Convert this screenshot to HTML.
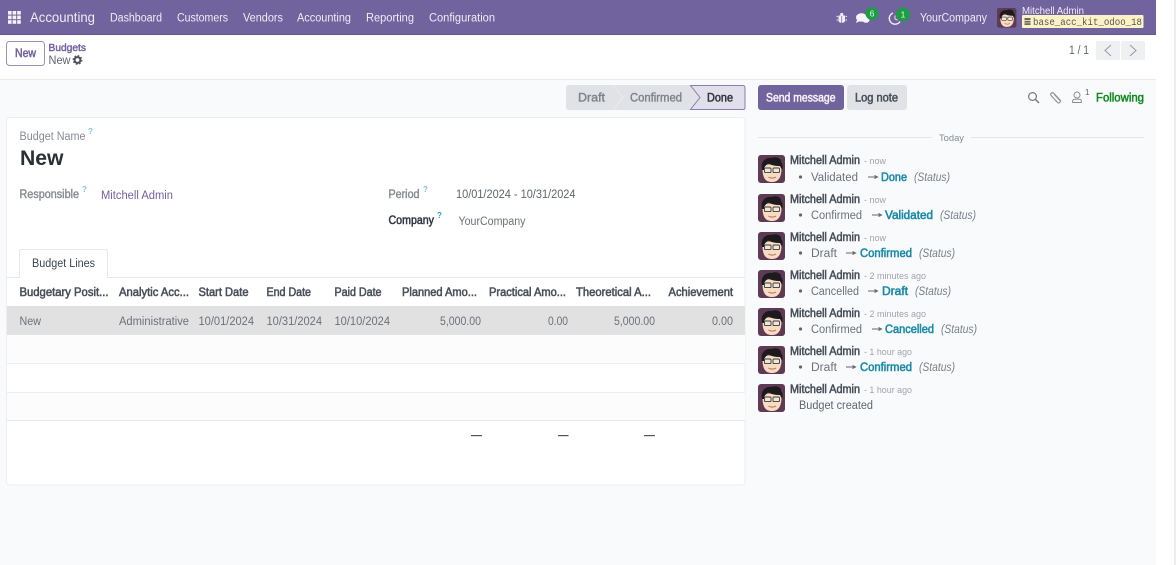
<!DOCTYPE html>
<html><head><meta charset="utf-8"><title>Budgets</title>
<style>
html,body{margin:0;padding:0;background:#fff;width:1176px;height:565px;overflow:hidden}
svg{display:block;position:absolute;left:0;top:0;filter:blur(.3px)}
text{font-family:"Liberation Sans",sans-serif;font-size:11.5px;fill:#6c7178}
.n{fill:#efecf5;font-size:11.5px}
.p{fill:#71639e}
.l{fill:#1a8aa8;stroke:#1a8aa8;stroke-width:.55px}
.s{font-style:italic;fill:#7a7f87}
.t{font-size:9.5px;fill:#a0a4aa}
.q{font-size:8px;fill:#7cc3da;font-weight:700}
.h{fill:#4a505b;stroke:#4a505b;stroke-width:.55px}
</style></head><body>
<svg width="1176" height="565" viewBox="0 0 1176 565" xmlns="http://www.w3.org/2000/svg">
<defs>
<g id="av">
<rect x="0" y="0" width="27" height="28" rx="3" fill="#5f3a54"/>
<path d="M4.500 13C4.500 24 8 27 14 27C20 27 23.500 23 23.500 13C23.500 8 4.500 8 4.500 13Z" fill="#f8dcc2"/>
<path d="M4 15C2 6 8 2 14 3C17 1 24 3 23 7C25 9 25 12 24 15L22 11C17 11 12 10 10 8C9 10 6 11 6 15Z" fill="#1d1a1e"/>
<rect x="6.500" y="13" width="6.500" height="4.600" rx="1" fill="#efe6da" stroke="#3a3a3a" stroke-width=".9"/>
<rect x="15" y="13" width="6.500" height="4.600" rx="1" fill="#efe6da" stroke="#3a3a3a" stroke-width=".9"/>
<path d="M10.500 22C12.500 23.500 16 23.500 18 22" stroke="#b06a52" stroke-width="1" fill="none"/>
</g>
<path id="arw" d="M0 3.500H8M6.500 2L9.500 3.500L6.500 5" stroke="#666" stroke-width="1" fill="none"/>
</defs>

<!-- backgrounds -->
<rect x="1174" y="0" width="2" height="565" fill="#eeeeee"/>
<rect x="0" y="79" width="1156" height="486" fill="#f9fafb"/>
<rect x="0" y="35" width="1156" height="44" fill="#fff"/>
<rect x="0" y="79" width="1156" height="1" fill="#e9ecef"/>
<rect x="0" y="0" width="1156" height="35" fill="#71639e"/>
<rect x="0" y="34" width="1156" height="1" fill="#65588f"/>

<!-- navbar -->
<g fill="#f4f2f8">
<rect x="8" y="11" width="3.600" height="3.600"/><rect x="12.600" y="11" width="3.600" height="3.600"/><rect x="17.200" y="11" width="3.600" height="3.600"/>
<rect x="8" y="15.600" width="3.600" height="3.600"/><rect x="12.600" y="15.600" width="3.600" height="3.600"/><rect x="17.200" y="15.600" width="3.600" height="3.600"/>
<rect x="8" y="20.200" width="3.600" height="3.600"/><rect x="12.600" y="20.200" width="3.600" height="3.600"/><rect x="17.200" y="20.200" width="3.600" height="3.600"/>
</g>
<text class="n" x="30" y="22" style="font-size:14px" textLength="65" lengthAdjust="spacingAndGlyphs">Accounting</text>
<text class="n" x="110" y="21.500" textLength="52" lengthAdjust="spacingAndGlyphs">Dashboard</text>
<text class="n" x="177" y="21.500" textLength="51" lengthAdjust="spacingAndGlyphs">Customers</text>
<text class="n" x="243" y="21.500" textLength="40" lengthAdjust="spacingAndGlyphs">Vendors</text>
<text class="n" x="297" y="21.500" textLength="54" lengthAdjust="spacingAndGlyphs">Accounting</text>
<text class="n" x="366" y="21.500" textLength="48" lengthAdjust="spacingAndGlyphs">Reporting</text>
<text class="n" x="429" y="21.500" textLength="66" lengthAdjust="spacingAndGlyphs">Configuration</text>

<!-- systray -->
<path d="M838.500 15.500H845V21.500Q843.500 23 841.750 23Q840 23 838.500 21.500Z" fill="#f1eef6"/>
<circle cx="841.750" cy="14.500" r="1.600" fill="#f1eef6"/>
<path d="M838 17L836.500 16M845.500 17L847 16M838 20H836.500M845.500 20H847" stroke="#f1eef6" stroke-width=".9"/>
<rect x="841.400" y="16" width=".7" height="7" fill="#71639e"/>
<ellipse cx="861.500" cy="17.500" rx="5.500" ry="4.200" fill="#f6f4f9"/>
<path d="M857 20L856 23L860 21Z" fill="#f6f4f9"/>
<ellipse cx="866" cy="20" rx="3.500" ry="2.800" fill="#f6f4f9"/>
<circle cx="872" cy="13.500" r="6.500" fill="#1f9d45"/>
<text x="872" y="16.500" text-anchor="middle" style="font-size:8.500px;fill:#eaf7ee">6</text>
<path d="M900 21.500A5.800 5.800 0 1 1 893 13" stroke="#f1eef6" stroke-width="1.400" fill="none"/>
<path d="M895 15.500V19L897.500 20.200" stroke="#f1eef6" stroke-width=".9" fill="none"/>
<circle cx="903" cy="14.500" r="7" fill="#1f9d45"/>
<text x="903" y="17.500" text-anchor="middle" style="font-size:8.500px;fill:#eaf7ee">1</text>
<text class="n" x="920" y="21.500" textLength="67" lengthAdjust="spacingAndGlyphs">YourCompany</text>
<use href="#av" transform="translate(997 8) scale(.72 .7)"/>
<text class="n" x="1022" y="14" style="font-size:10px" textLength="62" lengthAdjust="spacingAndGlyphs">Mitchell Admin</text>
<rect x="1022" y="15" width="121.500" height="13" rx="1" fill="#fdf2c6"/>
<rect x="1024.500" y="18" width="6" height="2" fill="#6a6a60"/><rect x="1024.500" y="20.800" width="6" height="1.800" fill="#6a6a60"/><rect x="1024.500" y="23.200" width="6" height="1.800" fill="#6a6a60"/>
<text x="1033" y="25" style="font-family:'Liberation Mono',monospace;font-size:10.500px;fill:#55554f" textLength="109" lengthAdjust="spacingAndGlyphs">base_acc_kit_odoo_18</text>

<!-- control panel -->
<rect x="6.500" y="41.500" width="38" height="24" rx="3" fill="#fff" stroke="#9a90ba"/>
<text class="p" x="15" y="57" textLength="21" lengthAdjust="spacingAndGlyphs" style="stroke:#71639e;stroke-width:.5px">New</text>
<text class="p" x="48.500" y="51" style="font-size:10.500px;stroke:#71639e;stroke-width:.45px" textLength="37.500" lengthAdjust="spacingAndGlyphs">Budgets</text>
<text x="48.500" y="64" textLength="22" lengthAdjust="spacingAndGlyphs" style="fill:#5f656d">New</text>
<circle cx="77.500" cy="60" r="2.900" fill="none" stroke="#4a5058" stroke-width="2"/>
<circle cx="77.500" cy="60" r="4.300" fill="none" stroke="#4a5058" stroke-width="1.200" stroke-dasharray="1.700 1.670"/>
<text x="1069" y="54" textLength="20" lengthAdjust="spacingAndGlyphs" style="fill:#5f656d">1 / 1</text>
<rect x="1096" y="41" width="24" height="19" rx="2" fill="#eff0f2"/>
<rect x="1121" y="41" width="24" height="19" rx="2" fill="#eff0f2"/>
<path d="M1111 45L1105 50.500L1111 56" stroke="#9a9ea5" stroke-width="1.100" fill="none"/>
<path d="M1130 45L1136 50.500L1130 56" stroke="#9a9ea5" stroke-width="1.100" fill="none"/>

<!-- statusbar -->
<path d="M569 85H613L623 97.500L613 110H569Q566 110 566 107V88Q566 85 569 85Z" fill="#e0e2e6"/>
<path d="M613 85H690L700 97.500L690 110H613L623 97.500Z" fill="#e0e2e6"/>
<path d="M613 85L623 97.500L613 110" stroke="#eaecee" stroke-width="1" fill="none"/>
<path d="M690.500 85.500H743Q745 85.500 745 88V107Q745 109.500 743 109.500H690.500L700 97.500Z" fill="#e2dfec" stroke="#8a7eb0"/>
<text x="578" y="101.500" textLength="27" lengthAdjust="spacingAndGlyphs" style="fill:#7e838a;stroke:#7e838a;stroke-width:.4px">Draft</text>
<text x="630" y="101.500" textLength="52" lengthAdjust="spacingAndGlyphs" style="fill:#7e838a;stroke:#7e838a;stroke-width:.4px">Confirmed</text>
<text x="707" y="101.500" textLength="26" lengthAdjust="spacingAndGlyphs" style="fill:#2f3540;stroke:#2f3540;stroke-width:.5px">Done</text>

<!-- chatter buttons -->
<rect x="758" y="85" width="86" height="25" rx="3" fill="#71639e"/>
<text x="766" y="101.500" textLength="69.500" lengthAdjust="spacingAndGlyphs" style="fill:#f6f4fa;stroke:#f6f4fa;stroke-width:.5px">Send message</text>
<rect x="847" y="85" width="60" height="25" rx="3" fill="#e0e2e6"/>
<text x="855" y="101.500" class="h" textLength="43" lengthAdjust="spacingAndGlyphs">Log note</text>
<circle cx="1032.500" cy="96.500" r="3.900" fill="none" stroke="#777" stroke-width="1.200"/>
<path d="M1035.500 99.500L1039 103" stroke="#777" stroke-width="1.400"/>
<path d="M1060.500 100.500L1054 93.500C1052 91.500 1049.500 93.800 1051.500 96L1057.500 102.500C1059 103.800 1061.500 102 1059.600 100L1054.500 94.800M1053 92.500L1061 101" fill="none" stroke="#8a8e94" stroke-width="1.100"/>
<circle cx="1077" cy="95" r="3" fill="none" stroke="#8a8e94" stroke-width="1"/>
<path d="M1072.600 102.500V100.800C1072.600 98.500 1081.400 98.500 1081.400 100.800V102.500Z" fill="none" stroke="#8a8e94" stroke-width="1"/>
<text x="1085" y="95" style="font-size:8px;fill:#666">1</text>
<text x="1096" y="101.500" textLength="48" lengthAdjust="spacingAndGlyphs" style="fill:#0f8a24;stroke:#0f8a24;stroke-width:.5px">Following</text>

<!-- sheet -->
<rect x="6.500" y="117.500" width="738.500" height="367.500" rx="3" fill="#fff" stroke="#eceef1"/>
<text x="19.500" y="140" textLength="66" lengthAdjust="spacingAndGlyphs" style="fill:#868b91">Budget Name</text>
<text class="q" x="88" y="134">?</text>
<text x="20" y="165" textLength="43.500" lengthAdjust="spacingAndGlyphs" style="font-size:21px;font-weight:700;fill:#2b3036">New</text>
<text x="19.500" y="198" textLength="59.500" lengthAdjust="spacingAndGlyphs" style="fill:#868b91;stroke:#868b91;stroke-width:.4px">Responsible</text>
<text class="q" x="82" y="192">?</text>
<text class="p" x="101" y="199" textLength="72" lengthAdjust="spacingAndGlyphs">Mitchell Admin</text>
<text x="388.500" y="198" textLength="31" lengthAdjust="spacingAndGlyphs" style="fill:#868b91;stroke:#868b91;stroke-width:.4px">Period</text>
<text class="q" x="423" y="192">?</text>
<text x="456" y="198" textLength="119.500" lengthAdjust="spacingAndGlyphs" style="fill:#5f656d">10/01/2024 - 10/31/2024</text>
<text x="388.500" y="224" textLength="45.500" lengthAdjust="spacingAndGlyphs" style="fill:#2f3540;stroke:#2f3540;stroke-width:.5px">Company</text>
<text class="q" x="437" y="218" style="fill:#2e9fc4">?</text>
<text x="458.500" y="225" textLength="67" lengthAdjust="spacingAndGlyphs">YourCompany</text>

<!-- tab -->
<path d="M7 277.500H745" stroke="#e4e6e9"/>
<path d="M19.500 277.500V251.500Q19.500 249.500 21.500 249.500H105.500Q107.500 249.500 107.500 251.500V277.500" fill="#fff" stroke="#e4e6e9"/>
<rect x="20" y="276" width="87" height="3" fill="#fff"/>
<text x="32" y="267" textLength="63" lengthAdjust="spacingAndGlyphs" style="fill:#3d4450">Budget Lines</text>

<!-- table -->
<g>
<text class="h" x="19.500" y="296" textLength="89" lengthAdjust="spacingAndGlyphs">Budgetary Posit...</text>
<text class="h" x="119" y="296" textLength="70" lengthAdjust="spacingAndGlyphs">Analytic Acc...</text>
<text class="h" x="198.500" y="296" textLength="50" lengthAdjust="spacingAndGlyphs">Start Date</text>
<text class="h" x="266.500" y="296" textLength="44.500" lengthAdjust="spacingAndGlyphs">End Date</text>
<text class="h" x="334.500" y="296" textLength="47" lengthAdjust="spacingAndGlyphs">Paid Date</text>
<text class="h" x="402" y="296" textLength="75" lengthAdjust="spacingAndGlyphs">Planned Amo...</text>
<text class="h" x="489" y="296" textLength="77" lengthAdjust="spacingAndGlyphs">Practical Amo...</text>
<text class="h" x="576" y="296" textLength="75" lengthAdjust="spacingAndGlyphs">Theoretical A...</text>
<text class="h" x="668.500" y="296" textLength="64.500" lengthAdjust="spacingAndGlyphs">Achievement</text>
</g>
<rect x="7" y="306" width="738" height="29" fill="#e1e1e1"/>
<rect x="7" y="335" width="738" height="28" fill="#fcfcfc"/>
<rect x="7" y="363" width="738" height="1" fill="#eceef0"/>
<rect x="7" y="392" width="738" height="1" fill="#eceef0"/>
<rect x="7" y="393" width="738" height="27" fill="#fcfcfc"/>
<rect x="7" y="420" width="738" height="1" fill="#e4e6e9"/>
<text x="19.500" y="325" textLength="21.500" lengthAdjust="spacingAndGlyphs">New</text>
<text x="119" y="325" textLength="70" lengthAdjust="spacingAndGlyphs">Administrative</text>
<text x="198.500" y="325" textLength="55.500" lengthAdjust="spacingAndGlyphs">10/01/2024</text>
<text x="266.500" y="325" textLength="55.500" lengthAdjust="spacingAndGlyphs">10/31/2024</text>
<text x="334.500" y="325" textLength="55.500" lengthAdjust="spacingAndGlyphs">10/10/2024</text>
<text x="440" y="325" textLength="41" lengthAdjust="spacingAndGlyphs">5,000.00</text>
<text x="548" y="325" textLength="20" lengthAdjust="spacingAndGlyphs">0.00</text>
<text x="614" y="325" textLength="41" lengthAdjust="spacingAndGlyphs">5,000.00</text>
<text x="712" y="325" textLength="21" lengthAdjust="spacingAndGlyphs">0.00</text>
<rect x="471" y="435" width="11" height="1.200" fill="#555"/>
<rect x="558" y="435" width="10.500" height="1.200" fill="#555"/>
<rect x="644" y="435" width="11" height="1.200" fill="#555"/>

<!-- chatter -->
<rect x="758" y="137" width="174" height="1" fill="#e4e6e9"/>
<rect x="971" y="137" width="173" height="1" fill="#e4e6e9"/>
<text x="939" y="141" style="font-size:9.500px;fill:#868b91" textLength="25" lengthAdjust="spacingAndGlyphs">Today</text>

<use href="#av" x="758" y="155"/>
<text class="h" x="790" y="164" textLength="70" lengthAdjust="spacingAndGlyphs">Mitchell Admin</text>
<text class="t" x="864" y="164" textLength="22" lengthAdjust="spacingAndGlyphs">- now</text>
<circle cx="800.500" cy="177" r="1.600" fill="#666"/>
<text x="811" y="181" textLength="47" lengthAdjust="spacingAndGlyphs">Validated</text>
<use href="#arw" x="868" y="173.500"/>
<text class="l" x="881" y="181" textLength="26" lengthAdjust="spacingAndGlyphs">Done</text>
<text class="s" x="914" y="181" textLength="36" lengthAdjust="spacingAndGlyphs">(Status)</text>

<use href="#av" x="758" y="194"/>
<text class="h" x="790" y="203" textLength="70" lengthAdjust="spacingAndGlyphs">Mitchell Admin</text>
<text class="t" x="864" y="203" textLength="22" lengthAdjust="spacingAndGlyphs">- now</text>
<circle cx="800.500" cy="215" r="1.600" fill="#666"/>
<text x="811" y="219" textLength="51" lengthAdjust="spacingAndGlyphs">Confirmed</text>
<use href="#arw" x="872" y="211.500"/>
<text class="l" x="885" y="219" textLength="48" lengthAdjust="spacingAndGlyphs">Validated</text>
<text class="s" x="940" y="219" textLength="36" lengthAdjust="spacingAndGlyphs">(Status)</text>

<use href="#av" x="758" y="232"/>
<text class="h" x="790" y="241" textLength="70" lengthAdjust="spacingAndGlyphs">Mitchell Admin</text>
<text class="t" x="864" y="241" textLength="22" lengthAdjust="spacingAndGlyphs">- now</text>
<circle cx="800.500" cy="253" r="1.600" fill="#666"/>
<text x="811" y="257" textLength="26" lengthAdjust="spacingAndGlyphs">Draft</text>
<use href="#arw" x="846" y="249.500"/>
<text class="l" x="860" y="257" textLength="52" lengthAdjust="spacingAndGlyphs">Confirmed</text>
<text class="s" x="919" y="257" textLength="36" lengthAdjust="spacingAndGlyphs">(Status)</text>

<use href="#av" x="758" y="270"/>
<text class="h" x="790" y="279" textLength="70" lengthAdjust="spacingAndGlyphs">Mitchell Admin</text>
<text class="t" x="864" y="279" textLength="62" lengthAdjust="spacingAndGlyphs">- 2 minutes ago</text>
<circle cx="800.500" cy="291" r="1.600" fill="#666"/>
<text x="811" y="295" textLength="48" lengthAdjust="spacingAndGlyphs">Cancelled</text>
<use href="#arw" x="868" y="287.500"/>
<text class="l" x="882" y="295" textLength="26" lengthAdjust="spacingAndGlyphs">Draft</text>
<text class="s" x="915" y="295" textLength="36" lengthAdjust="spacingAndGlyphs">(Status)</text>

<use href="#av" x="758" y="308"/>
<text class="h" x="790" y="317" textLength="70" lengthAdjust="spacingAndGlyphs">Mitchell Admin</text>
<text class="t" x="864" y="317" textLength="62" lengthAdjust="spacingAndGlyphs">- 2 minutes ago</text>
<circle cx="800.500" cy="329" r="1.600" fill="#666"/>
<text x="811" y="333" textLength="51" lengthAdjust="spacingAndGlyphs">Confirmed</text>
<use href="#arw" x="872" y="325.500"/>
<text class="l" x="885" y="333" textLength="49" lengthAdjust="spacingAndGlyphs">Cancelled</text>
<text class="s" x="941" y="333" textLength="36" lengthAdjust="spacingAndGlyphs">(Status)</text>

<use href="#av" x="758" y="346"/>
<text class="h" x="790" y="355" textLength="70" lengthAdjust="spacingAndGlyphs">Mitchell Admin</text>
<text class="t" x="864" y="355" textLength="48" lengthAdjust="spacingAndGlyphs">- 1 hour ago</text>
<circle cx="800.500" cy="367" r="1.600" fill="#666"/>
<text x="811" y="371" textLength="26" lengthAdjust="spacingAndGlyphs">Draft</text>
<use href="#arw" x="846" y="363.500"/>
<text class="l" x="860" y="371" textLength="52" lengthAdjust="spacingAndGlyphs">Confirmed</text>
<text class="s" x="919" y="371" textLength="36" lengthAdjust="spacingAndGlyphs">(Status)</text>

<use href="#av" x="758" y="384"/>
<text class="h" x="790" y="393" textLength="70" lengthAdjust="spacingAndGlyphs">Mitchell Admin</text>
<text class="t" x="864" y="393" textLength="48" lengthAdjust="spacingAndGlyphs">- 1 hour ago</text>
<text x="799" y="409" textLength="74" lengthAdjust="spacingAndGlyphs" style="fill:#5f656d">Budget created</text>
</svg>
</body></html>
